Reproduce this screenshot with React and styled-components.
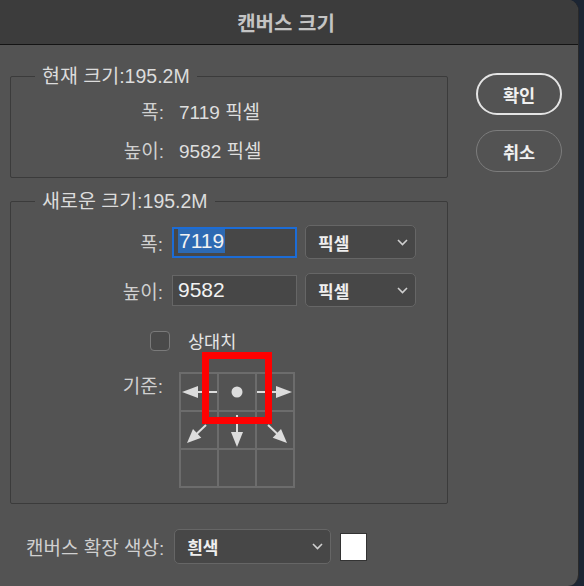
import React from "react";
import styled, { createGlobalStyle } from "styled-components";

const GlobalStyle = createGlobalStyle`
  html, body {
    margin: 0;
    padding: 0;
    background: #1c2533;
  }
  body {
    font-family: "Liberation Sans", "Noto Sans CJK KR", sans-serif;
  }
`;

const Window = styled.div`
  width: 579px;
  height: 586px;
  background: #535353;
  border-radius: 0 11px 11px 0;
  border-right: 1px solid #2a2a2a;
  box-sizing: border-box;
  overflow: hidden;
  display: flex;
  flex-direction: column;
  color: #d4d4d4;
  font-size: 19px;
`;

const TitleBar = styled.div`
  height: 44px;
  flex: none;
  background: #3c3c3c;
  border-bottom: 1px solid #141414;
  display: flex;
  align-items: center;
  justify-content: center;
  padding-right: 6px;
  font-size: 20px;
  font-weight: 700;
  color: #c4c4c4;
`;

const Body = styled.div`
  padding: 21px 16px 0 10px;
  display: flex;
  flex-direction: column;
`;

const TopSection = styled.div`
  display: flex;
  align-items: flex-start;
`;

const LeftCol = styled.div`
  display: flex;
  flex-direction: column;
  gap: 13px;
`;

const Group = styled.fieldset`
  margin: 0;
  padding: ${(p) => p.$pad};
  width: 438px;
  box-sizing: border-box;
  border: 1px solid #3b3b3b;
  border-radius: 2px;
`;

const Legend = styled.legend`
  margin-left: 24px;
  padding: 0 7px;
  line-height: 20px;
  font-size: 19.5px;
  color: #dcdcdc;
  white-space: nowrap;
`;

const InfoGrid = styled.div`
  display: grid;
  grid-template-columns: 153px auto;
  column-gap: 15px;
  row-gap: 15px;
  line-height: 24px;
`;

const Label = styled.div`
  text-align: right;
  color: #d0d0d0;
  white-space: nowrap;
`;

const Value = styled.div`
  color: #dedede;
  white-space: nowrap;
`;

const FormGrid = styled.div`
  display: grid;
  grid-template-columns: 152px 126px 111px;
  column-gap: 8px;
  row-gap: 14px;
  align-items: center;
  & > :nth-child(3n + 2) {
    margin-left: 1px;
  }
`;

const Input = styled.div`
  height: 31px;
  box-sizing: border-box;
  background: #474747;
  border: ${(p) => (p.$focused ? "2px solid #1c6cd6" : "1px solid #666")};
  padding-left: ${(p) => (p.$focused ? 4 : 5)}px;
  display: flex;
  align-items: ${(p) => (p.$focused ? "flex-start" : "center")};
  font-size: 21px;
  color: #f2f2f2;
`;

const Selected = styled.span`
  background: #2d6ab3;
  padding: 0 1px;
  line-height: 24px;
`;

const Select = styled.div`
  height: ${(p) => p.$height}px;
  width: ${(p) => p.$width}px;
  box-sizing: border-box;
  background: #474747;
  border: 1px solid #666;
  border-radius: 5px;
  display: flex;
  align-items: center;
  justify-content: space-between;
  padding: 0 7px 0 12px;
  font-size: 17px;
  font-weight: 700;
  color: #efefef;
`;

const CheckRow = styled.div`
  display: flex;
  align-items: center;
  gap: 18px;
  margin: 21px 0 0 139px;
`;

const CheckBox = styled.div`
  width: 20px;
  height: 20px;
  box-sizing: border-box;
  border: 1px solid #7a7a7a;
  border-radius: 4px;
  background: #4a4a4a;
`;

const CheckLabel = styled.span`
  font-size: 17.5px;
  color: #e6e6e6;
`;

const AnchorRow = styled.div`
  display: flex;
  align-items: flex-start;
  gap: 16px;
  margin-top: 19px;
`;

const AnchorLabel = styled(Label)`
  width: 152px;
  line-height: 24px;
  margin-top: 3px;
`;

const AnchorGrid = styled.div`
  position: relative;
  display: grid;
  grid-template-columns: repeat(3, 36px);
  grid-template-rows: repeat(3, 36px);
  gap: 2px;
  padding: 2px;
  background: #6c6c6c;
`;

const Cell = styled.div`
  background: #535353;
  display: flex;
`;

const Highlight = styled.div`
  position: absolute;
  left: 23px;
  top: -20px;
  width: 70px;
  height: 72px;
  box-sizing: border-box;
  border: 7px solid #ff0000;
  pointer-events: none;
`;

const ButtonCol = styled.div`
  margin-left: auto;
  margin-top: 7px;
  display: flex;
  flex-direction: column;
  gap: 15px;
`;

const PillButton = styled.button`
  width: 86px;
  height: 42px;
  border-radius: 21px;
  background: transparent;
  border: ${(p) => (p.$primary ? "2px solid #e4e4e4" : "1.5px solid #7c7c7c")};
  color: #f0f0f0;
  font-family: inherit;
  font-size: 17.5px;
  font-weight: 700;
  padding: 0;
`;

const BottomRow = styled.div`
  display: flex;
  align-items: center;
  margin: 25px 0 0 16px;
`;

const BottomLabel = styled.span`
  color: #d0d0d0;
  margin-right: 10px;
  white-space: nowrap;
`;

const Swatch = styled.div`
  width: 27px;
  height: 28px;
  box-sizing: border-box;
  background: #ffffff;
  border: 1px solid #333;
  margin-left: 9px;
`;

const Chevron = () => (
  <svg width="11" height="7" viewBox="0 0 11 7">
    <polyline points="1,1 5.5,5.5 10,1" fill="none" stroke="#cfcfcf" strokeWidth="1.6" />
  </svg>
);

const ARROW = "#dcdcdc";

const anchorIcons = [
  <svg width="36" height="36" key="l">
    <line x1="15" y1="18" x2="36" y2="18" stroke={ARROW} strokeWidth="2" />
    <polygon points="1,18 17,12 17,24" fill={ARROW} />
  </svg>,
  <svg width="36" height="36" key="c">
    <circle cx="18" cy="18" r="5.5" fill={ARROW} />
  </svg>,
  <svg width="36" height="36" key="r">
    <line x1="0" y1="18" x2="20" y2="18" stroke={ARROW} strokeWidth="2" />
    <polygon points="35,18 19,12 19,24" fill={ARROW} />
  </svg>,
  <svg width="36" height="36" key="dl">
    <line x1="25" y1="13" x2="15" y2="22.5" stroke={ARROW} strokeWidth="2" />
    <polygon points="6,31 20.3,25.8 12,17" fill={ARROW} />
  </svg>,
  <svg width="36" height="36" key="d">
    <line x1="18" y1="3" x2="18" y2="22" stroke={ARROW} strokeWidth="2" />
    <polygon points="18,35 12,20 24,20" fill={ARROW} />
  </svg>,
  <svg width="36" height="36" key="dr">
    <line x1="11" y1="13" x2="21" y2="22.5" stroke={ARROW} strokeWidth="2" />
    <polygon points="30,31 15.7,25.8 24,17" fill={ARROW} />
  </svg>,
  null,
  null,
  null,
];

export default function App() {
  return (
    <>
      <GlobalStyle />
      <Window>
        <TitleBar>캔버스 크기</TitleBar>
        <Body>
          <TopSection>
            <LeftCol>
              <Group $pad="15px 0 13px 0">
                <Legend>현재 크기:195.2M</Legend>
                <InfoGrid>
                  <Label>폭:</Label>
                  <Value>7119 픽셀</Value>
                  <Label>높이:</Label>
                  <Value>9582 픽셀</Value>
                </InfoGrid>
              </Group>
              <Group $pad="14px 0 15px 0">
                <Legend>새로운 크기:195.2M</Legend>
                <FormGrid>
                  <Label>폭:</Label>
                  <Input $focused>
                    <Selected>7119</Selected>
                  </Input>
                  <Select $width={111} $height={34}>
                    픽셀
                    <Chevron />
                  </Select>
                  <Label>높이:</Label>
                  <Input>9582</Input>
                  <Select $width={111} $height={34}>
                    픽셀
                    <Chevron />
                  </Select>
                </FormGrid>
                <CheckRow>
                  <CheckBox />
                  <CheckLabel>상대치</CheckLabel>
                </CheckRow>
                <AnchorRow>
                  <AnchorLabel>기준:</AnchorLabel>
                  <AnchorGrid>
                    {anchorIcons.map((icon, i) => (
                      <Cell key={i}>{icon}</Cell>
                    ))}
                    <Highlight />
                  </AnchorGrid>
                </AnchorRow>
              </Group>
            </LeftCol>
            <ButtonCol>
              <PillButton $primary>확인</PillButton>
              <PillButton>취소</PillButton>
            </ButtonCol>
          </TopSection>
          <BottomRow>
            <BottomLabel>캔버스 확장 색상:</BottomLabel>
            <Select $width={157} $height={35}>
              흰색
              <Chevron />
            </Select>
            <Swatch />
          </BottomRow>
        </Body>
      </Window>
    </>
  );
}
